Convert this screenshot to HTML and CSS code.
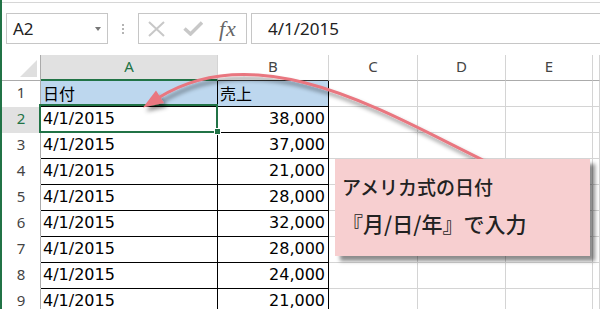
FILE: index.html
```html
<!DOCTYPE html>
<html lang="ja">
<head>
    <meta charset="UTF-8">
    <meta name="viewport" content="width=device-width, initial-scale=1.0">
    <title>アメリカ式の日付</title>
    <link rel="stylesheet" href="styles.css">
</head>
<body>
    <div class="window">
        <div class="formula-bar">
            <div class="name-box">
                <span>A2</span>
                <span class="caret"></span>
            </div>
            <div class="grip"><i></i><i></i><i></i></div>
            <div class="fx-buttons">
                <svg class="btn-cancel" width="17" height="16" viewBox="0 0 17 16"><path d="M1 1L16 15M16 1L1 15"/></svg>
                <svg class="btn-enter" width="20" height="15" viewBox="0 0 20 15"><path d="M1.5 7.5L7.5 13L19 1.5"/></svg>
                <span class="fx">fx</span>
            </div>
            <div class="formula-input">4/1/2015</div>
        </div>

        <div class="sheet">
            <div class="row head">
                <div class="corner"></div>
                <div class="hd active">A</div>
                <div class="hd top">B</div>
                <div class="hd">C</div>
                <div class="hd">D</div>
                <div class="hd">E</div>
                <div class="hd"></div>
            </div>
            <div class="row">
                <div class="rh">1</div>
                <div class="cell tbl title">日付</div>
                <div class="cell tbl title">売上</div>
                <div class="cell"></div><div class="cell"></div><div class="cell"></div><div class="cell"></div>
            </div>
            <div class="row">
                <div class="rh active">2</div>
                <div class="cell tbl selected">4/1/2015</div>
                <div class="cell tbl num">38,000</div>
                <div class="cell"></div><div class="cell"></div><div class="cell"></div><div class="cell"></div>
            </div>
            <div class="row">
                <div class="rh">3</div>
                <div class="cell tbl">4/1/2015</div>
                <div class="cell tbl num">37,000</div>
                <div class="cell"></div><div class="cell"></div><div class="cell"></div><div class="cell"></div>
            </div>
            <div class="row">
                <div class="rh">4</div>
                <div class="cell tbl">4/1/2015</div>
                <div class="cell tbl num">21,000</div>
                <div class="cell"></div><div class="cell"></div><div class="cell"></div><div class="cell"></div>
            </div>
            <div class="row">
                <div class="rh">5</div>
                <div class="cell tbl">4/1/2015</div>
                <div class="cell tbl num">28,000</div>
                <div class="cell"></div><div class="cell"></div><div class="cell"></div><div class="cell"></div>
            </div>
            <div class="row">
                <div class="rh">6</div>
                <div class="cell tbl">4/1/2015</div>
                <div class="cell tbl num">32,000</div>
                <div class="cell"></div><div class="cell"></div><div class="cell"></div><div class="cell"></div>
            </div>
            <div class="row">
                <div class="rh">7</div>
                <div class="cell tbl">4/1/2015</div>
                <div class="cell tbl num">28,000</div>
                <div class="cell"></div><div class="cell"></div><div class="cell"></div><div class="cell"></div>
            </div>
            <div class="row">
                <div class="rh">8</div>
                <div class="cell tbl">4/1/2015</div>
                <div class="cell tbl num">24,000</div>
                <div class="cell"></div><div class="cell"></div><div class="cell"></div><div class="cell"></div>
            </div>
            <div class="row">
                <div class="rh">9</div>
                <div class="cell tbl">4/1/2015</div>
                <div class="cell tbl num">21,000</div>
                <div class="cell"></div><div class="cell"></div><div class="cell"></div><div class="cell"></div>
            </div>
        </div>

        <svg class="arrow" width="600" height="309" viewBox="0 0 600 309">
            <defs>
                <filter id="shadow" x="-10%" y="-20%" width="130%" height="160%">
                    <feDropShadow dx="3" dy="4" stdDeviation="2" flood-color="#000" flood-opacity="0.45"/>
                </filter>
            </defs>
            <g filter="url(#shadow)">
                <path d="M483 160C390 115 260 34 158 98" fill="none" stroke="#e97780" stroke-width="3"/>
                <polygon points="143,107.5 164,103 156,90.5" fill="#e97780"/>
            </g>
        </svg>

        <div class="callout">
            <div>アメリカ式の日付</div>
            <div class="big">『月/日/年』で入力</div>
        </div>
    </div>
</body>
</html>
```

FILE: styles.css
```css
body {
    margin: 0;
    background-color: #fff;
    font-family: "Noto Sans", sans-serif;
}
.window {
    position: relative;
    width: 600px;
    height: 309px;
    box-sizing: border-box;
    border-left: 2px solid #217346;
    padding-top: 2px;
    overflow: hidden;
}

/* formula bar */
.formula-bar {
    display: flex;
    align-items: center;
    border-top: 1px solid #d6d6d6;
    padding: 10px 0 11px 4px;
}
.name-box {
    display: flex;
    align-items: center;
    width: 102px;
    height: 31px;
    box-sizing: border-box;
    border: 1px solid #c6c6c6;
    padding-left: 6px;
    font-size: 17px;
    color: #222;
}
.caret {
    margin-left: auto;
    margin-right: 6px;
    border-top: 4px solid #777;
    border-left: 3.5px solid transparent;
    border-right: 3.5px solid transparent;
}
.grip {
    display: flex;
    flex-direction: column;
    gap: 2px;
    margin: 0 14px;
}
.grip i {
    display: block;
    width: 2px;
    height: 2px;
    background-color: #b4b4b4;
}
.fx-buttons {
    display: flex;
    align-items: center;
    width: 109px;
    height: 31px;
    box-sizing: border-box;
    border: 1px solid #c6c6c6;
    padding-left: 9px;
}
.btn-cancel {
    fill: none;
    stroke: #c8c8c8;
    stroke-width: 2;
    margin-right: 18px;
}
.btn-enter {
    fill: none;
    stroke: #c8c8c8;
    stroke-width: 3.5;
    margin-right: 16px;
}
.fx {
    font-family: "Liberation Serif", serif;
    font-style: italic;
    font-size: 22px;
    letter-spacing: 1px;
    color: #666;
}
.formula-input {
    flex: 1;
    display: flex;
    align-items: center;
    height: 31px;
    box-sizing: border-box;
    margin-left: 4px;
    border: 1px solid #c6c6c6;
    border-right: none;
    padding-left: 16px;
    font-size: 17px;
    color: #222;
}

/* sheet grid */
.row {
    display: grid;
    grid-template-columns: 39px 177px 111px 89px 88px 87px 7px;
    height: 26px;
}
.row > div {
    box-sizing: border-box;
    border-right: 1px solid #d4d4d4;
    border-bottom: 1px solid #d4d4d4;
    overflow: hidden;
    white-space: nowrap;
}
.head .hd {
    text-align: center;
    font-size: 15px;
    line-height: 22px;
    color: #444;
    border-bottom-color: #ababab;
}
.head .hd.active {
    background-color: #e1e1e1;
    color: #217346;
    border-bottom: 2px solid #217346;
}
.head .hd.top {
    border-bottom-color: #333;
}
.head .corner {
    position: relative;
    border-right-color: #ababab;
    border-bottom-color: #ababab;
}
.corner::after {
    content: "";
    position: absolute;
    right: 3px;
    bottom: 3px;
    width: 17px;
    height: 17px;
    background-color: #dfdfdf;
    clip-path: polygon(100% 0, 100% 100%, 0 100%);
}
.row .rh {
    text-align: center;
    font-size: 15px;
    line-height: 23px;
    color: #444;
    border-right-color: #ababab;
    border-bottom-color: transparent;
}
.row .rh.active {
    background-color: #e1e1e1;
    color: #217346;
}
.cell {
    padding: 0 2px;
    font-family: "DejaVu Sans", sans-serif;
    font-size: 16px;
    line-height: 24px;
    color: #000;
}
.row .tbl {
    border-right-color: #000;
    border-bottom-color: #000;
}
.title {
    background-color: #bdd7ee;
    font-family: "Noto Sans CJK JP", sans-serif;
}
.num {
    text-align: right;
    padding-right: 3px;
}
.row .selected {
    position: relative;
    overflow: visible;
}
.selected::after {
    content: "";
    position: absolute;
    left: -2px;
    top: -3px;
    width: 179px;
    height: 29px;
    box-sizing: border-box;
    border: 2px solid #217346;
    z-index: 2;
}
.selected::before {
    content: "";
    position: absolute;
    left: 173px;
    top: 21px;
    width: 5px;
    height: 5px;
    background-color: #217346;
    border: 1px solid #fff;
    z-index: 3;
}

/* annotation */
.arrow {
    position: absolute;
    left: -2px;
    top: 0;
    z-index: 4;
    pointer-events: none;
}
.callout {
    position: absolute;
    left: 333px;
    top: 159px;
    width: 255px;
    height: 97px;
    box-sizing: border-box;
    padding: 10px 0 0 7px;
    background-color: #f7cfd0;
    box-shadow: 5px 5px 4px rgba(0, 0, 0, 0.45);
    font-family: "Noto Sans CJK JP", sans-serif;
    font-size: 19px;
    font-weight: 500;
    line-height: 36px;
    color: #222;
    z-index: 5;
}
.callout .big {
    font-size: 21px;
}
```
